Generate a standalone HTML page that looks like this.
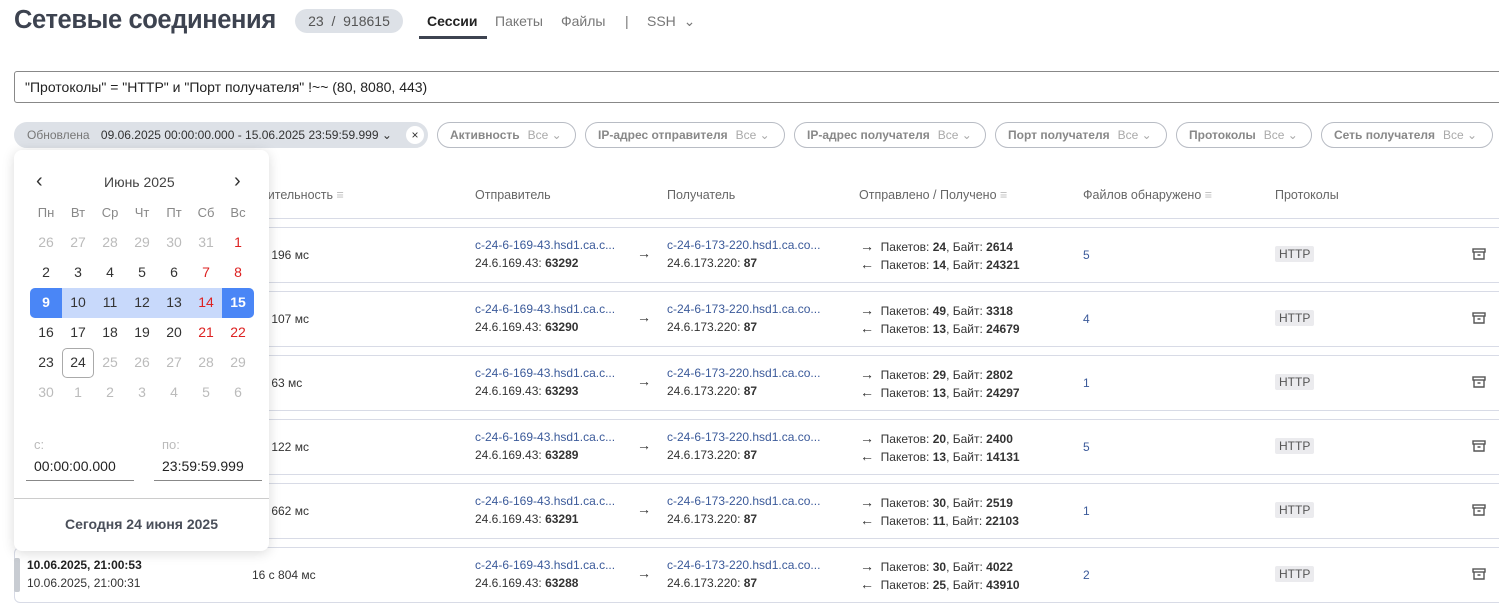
<!DOCTYPE html>
<html><head><meta charset="utf-8"><style>
*{box-sizing:border-box;margin:0;padding:0}
body{width:1499px;height:606px;overflow:hidden;background:#fff;font-family:"Liberation Sans",sans-serif;color:#333;font-size:13px;position:relative}
.a{position:absolute;white-space:nowrap}
.title{left:14px;top:6px;font-size:25.5px;font-weight:bold;color:#3d4350;letter-spacing:-0.4px}
.badge{left:295px;top:9px;width:108px;height:24px;border-radius:12px;background:#dde1e7;color:#555;font-size:14px;text-align:center;line-height:24px}
.tab{top:13px;font-size:14px;color:#777}
.search{left:14px;top:71px;width:1500px;height:32px;border:1px solid #888;border-radius:3px;padding:0 10px;line-height:31px;font-size:14px;color:#222}
.chip{top:122px;height:26px;border:1px solid #b8bcc4;border-radius:13px;font-size:12px;line-height:24px;padding-left:12px;color:#888;font-weight:bold}
.chip span{font-weight:normal;color:#aaa;margin-left:8px}
.hd{top:188px;font-size:12.5px;color:#666}
.row{left:14px;width:1500px;height:56px;border:1px solid #d8dbe6;border-radius:6px}
.l{font-size:12px;color:#3b5a9a}
.s{font-size:12px;color:#333}
.ar{font-size:14px;color:#333}
.http{font-size:12px;background:#ebebee;color:#555;padding:1px 4px;border-radius:2px}
.cal{left:14px;top:150px;width:255px;height:401px;background:#fff;border-radius:8px;box-shadow:0 2px 12px rgba(0,0,0,.15)}
.d{width:32px;text-align:center;font-size:14px}
</style></head><body>
<div class="a title">Сетевые соединения</div>
<div class="a badge">23 &nbsp;/ &nbsp;918615</div>
<div class="a tab" style="left:427px;color:#222;font-weight:bold">Сессии</div>
<div class="a" style="left:419px;top:36px;width:68px;height:3px;background:#3d4350"></div>
<div class="a tab" style="left:495px">Пакеты</div>
<div class="a tab" style="left:561px">Файлы</div>
<div class="a tab" style="left:625px">|</div>
<div class="a tab" style="left:647px">SSH &nbsp;⌄</div>
<div class="a search">"Протоколы" = "HTTP" и "Порт получателя" !~~ (80, 8080, 443)</div>
<div class="a chip" style="left:14px;width:414px;background:#dde1e7;border-color:#dde1e7;font-weight:normal;color:#777">Обновлена <b style="font-weight:normal;color:#333;margin-left:8px">09.06.2025 00:00:00.000 - 15.06.2025 23:59:59.999 ⌄</b><i style="position:absolute;right:3px;top:3px;width:18px;height:18px;border-radius:9px;background:#fff;font-style:normal;text-align:center;line-height:18px;color:#333">×</i></div>
<div class="a chip" style="left:437px;width:139px">Активность<span>Все ⌄</span></div>
<div class="a chip" style="left:585px;width:200px">IP-адрес отправителя<span>Все ⌄</span></div>
<div class="a chip" style="left:794px;width:192px">IP-адрес получателя<span>Все ⌄</span></div>
<div class="a chip" style="left:995px;width:172px">Порт получателя<span>Все ⌄</span></div>
<div class="a chip" style="left:1176px;width:136px">Протоколы<span>Все ⌄</span></div>
<div class="a chip" style="left:1321px;width:172px">Сеть получателя<span>Все ⌄</span></div>

<div class="a hd" style="left:252px">Длительность <span style="color:#bbb">≡</span></div>
<div class="a hd" style="left:475px">Отправитель</div>
<div class="a hd" style="left:667px">Получатель</div>
<div class="a hd" style="left:859px">Отправлено / Получено <span style="color:#bbb">≡</span></div>
<div class="a hd" style="left:1083px">Файлов обнаружено <span style="color:#bbb">≡</span></div>
<div class="a hd" style="left:1275px">Протоколы</div>
<div class="a" style="left:14px;top:218px;width:1485px;height:1px;background:#d8dbe6"></div>

<div id="rows"></div>
<script>
var R=[["196 мс","63292",24,2614,14,24321,5],["107 мс","63290",49,3318,13,24679,4],["63 мс","63293",29,2802,13,24297,1],["122 мс","63289",20,2400,13,14131,5],["662 мс","63291",30,2519,11,22103,1],["804 мс","63288",30,4022,25,43910,2]];
var h="";
R.forEach(function(r,i){var t=227+64*i;
h+='<div class="a row" style="top:'+t+'px"></div>';
h+='<div class="a s" style="left:'+(i==5?252:262)+'px;top:'+(t+21)+'px">'+(i==5?'16 с ':'с ')+r[0]+'</div>';
h+='<div class="a l" style="left:475px;top:'+(t+11)+'px">c-24-6-169-43.hsd1.ca.c...</div><div class="a s" style="left:475px;top:'+(t+29)+'px">24.6.169.43: <b>'+r[1]+'</b></div>';
h+='<div class="a ar" style="left:637px;top:'+(t+18)+'px">→</div>';
h+='<div class="a l" style="left:667px;top:'+(t+11)+'px">c-24-6-173-220.hsd1.ca.co...</div><div class="a s" style="left:667px;top:'+(t+29)+'px">24.6.173.220: <b>87</b></div>';
h+='<div class="a s" style="left:860px;top:'+(t+11)+'px"><span class="ar">→</span>&nbsp; Пакетов: <b>'+r[2]+'</b>, Байт: <b>'+r[3]+'</b></div>';
h+='<div class="a s" style="left:860px;top:'+(t+29)+'px"><span class="ar">←</span>&nbsp; Пакетов: <b>'+r[4]+'</b>, Байт: <b>'+r[5]+'</b></div>';
h+='<div class="a l" style="left:1083px;top:'+(t+21)+'px">'+r[6]+'</div>';
h+='<div class="a http" style="left:1275px;top:'+(t+19)+'px">HTTP</div>';
h+='<svg class="a" style="left:1472px;top:'+(t+20)+'px" width="14" height="14" viewBox="0 0 14 14" fill="none" stroke="#555" stroke-width="1.4"><rect x="1" y="2" width="12" height="3"/><path d="M2 5v7h10V5M5.5 8h3"/></svg>';
});
document.getElementById('rows').innerHTML=h;
</script>
<div class="a" style="left:14px;top:558px;width:6px;height:34px;background:#c8ccd2;border-radius:2px"></div>
<div class="a" style="left:27px;top:558px;font-size:12px;font-weight:bold;color:#222">10.06.2025, 21:00:53</div>
<div class="a s" style="left:27px;top:576px">10.06.2025, 21:00:31</div>

<div class="a cal">
<div class="a" style="left:22px;top:20px;font-size:20px;color:#333">‹</div>
<div class="a" style="left:90px;top:24px;font-size:14px;color:#444">Июнь 2025</div>
<div class="a" style="left:220px;top:20px;font-size:20px;color:#333">›</div>
<div id="cg"></div>
<div class="a" style="left:20px;top:287px;font-size:13px;color:#bbb">с:</div>
<div class="a" style="left:148px;top:287px;font-size:13px;color:#bbb">по:</div>
<div class="a" style="left:12px;top:308px;width:108px;height:23px;border-bottom:1px solid #888;font-size:14px;padding-left:8px;color:#222">00:00:00.000</div>
<div class="a" style="left:140px;top:308px;width:108px;height:23px;border-bottom:1px solid #888;font-size:14px;padding-left:8px;color:#222">23:59:59.999</div>
<div class="a" style="left:0;top:348px;width:255px;height:1px;background:#ccc"></div>
<div class="a" style="left:0;top:366px;width:255px;text-align:center;font-size:14px;font-weight:bold;color:#4a4f5a">Сегодня 24 июня 2025</div>
</div>
<script>
var g="",w=["Пн","Вт","Ср","Чт","Пт","Сб","Вс"];
w.forEach(function(x,i){g+='<div class="a d" style="left:'+(16+32*i)+'px;top:55px;color:#888;font-size:13px">'+x+'</div>';});
g+='<div class="a" style="left:16px;top:138px;width:224px;height:30px;background:#c8d9fb;border-radius:5px"></div>';
g+='<div class="a" style="left:16px;top:138px;width:32px;height:30px;background:#4a86f6;border-radius:5px 0 0 5px"></div>';
g+='<div class="a" style="left:208px;top:138px;width:32px;height:30px;background:#4a86f6;border-radius:0 5px 5px 0"></div>';
g+='<div class="a" style="left:48px;top:198px;width:32px;height:30px;border:1px solid #aaa;border-radius:5px"></div>';
var rows=[[26,27,28,29,30,31,1],[2,3,4,5,6,7,8],[9,10,11,12,13,14,15],[16,17,18,19,20,21,22],[23,24,25,26,27,28,29],[30,1,2,3,4,5,6]];
rows.forEach(function(r,ri){r.forEach(function(n,ci){
var c="#333";var out=(ri==0&&ci<6)||(ri==4&&ci>1)||ri==5;
if(ci>=5)c="#d22";if(ri==0&&ci==5)c="#bbb";if(out)c="#bbb";
if(ri==2&&(ci==0||ci==6))c="#fff";
g+='<div class="a d" style="left:'+(16+32*ci)+'px;top:'+(84+30*ri)+'px;color:'+c+(ri==2&&(ci==0||ci==6)?';font-weight:bold':'')+'">'+n+'</div>';});});
document.getElementById('cg').innerHTML=g;
</script>
</body></html>
